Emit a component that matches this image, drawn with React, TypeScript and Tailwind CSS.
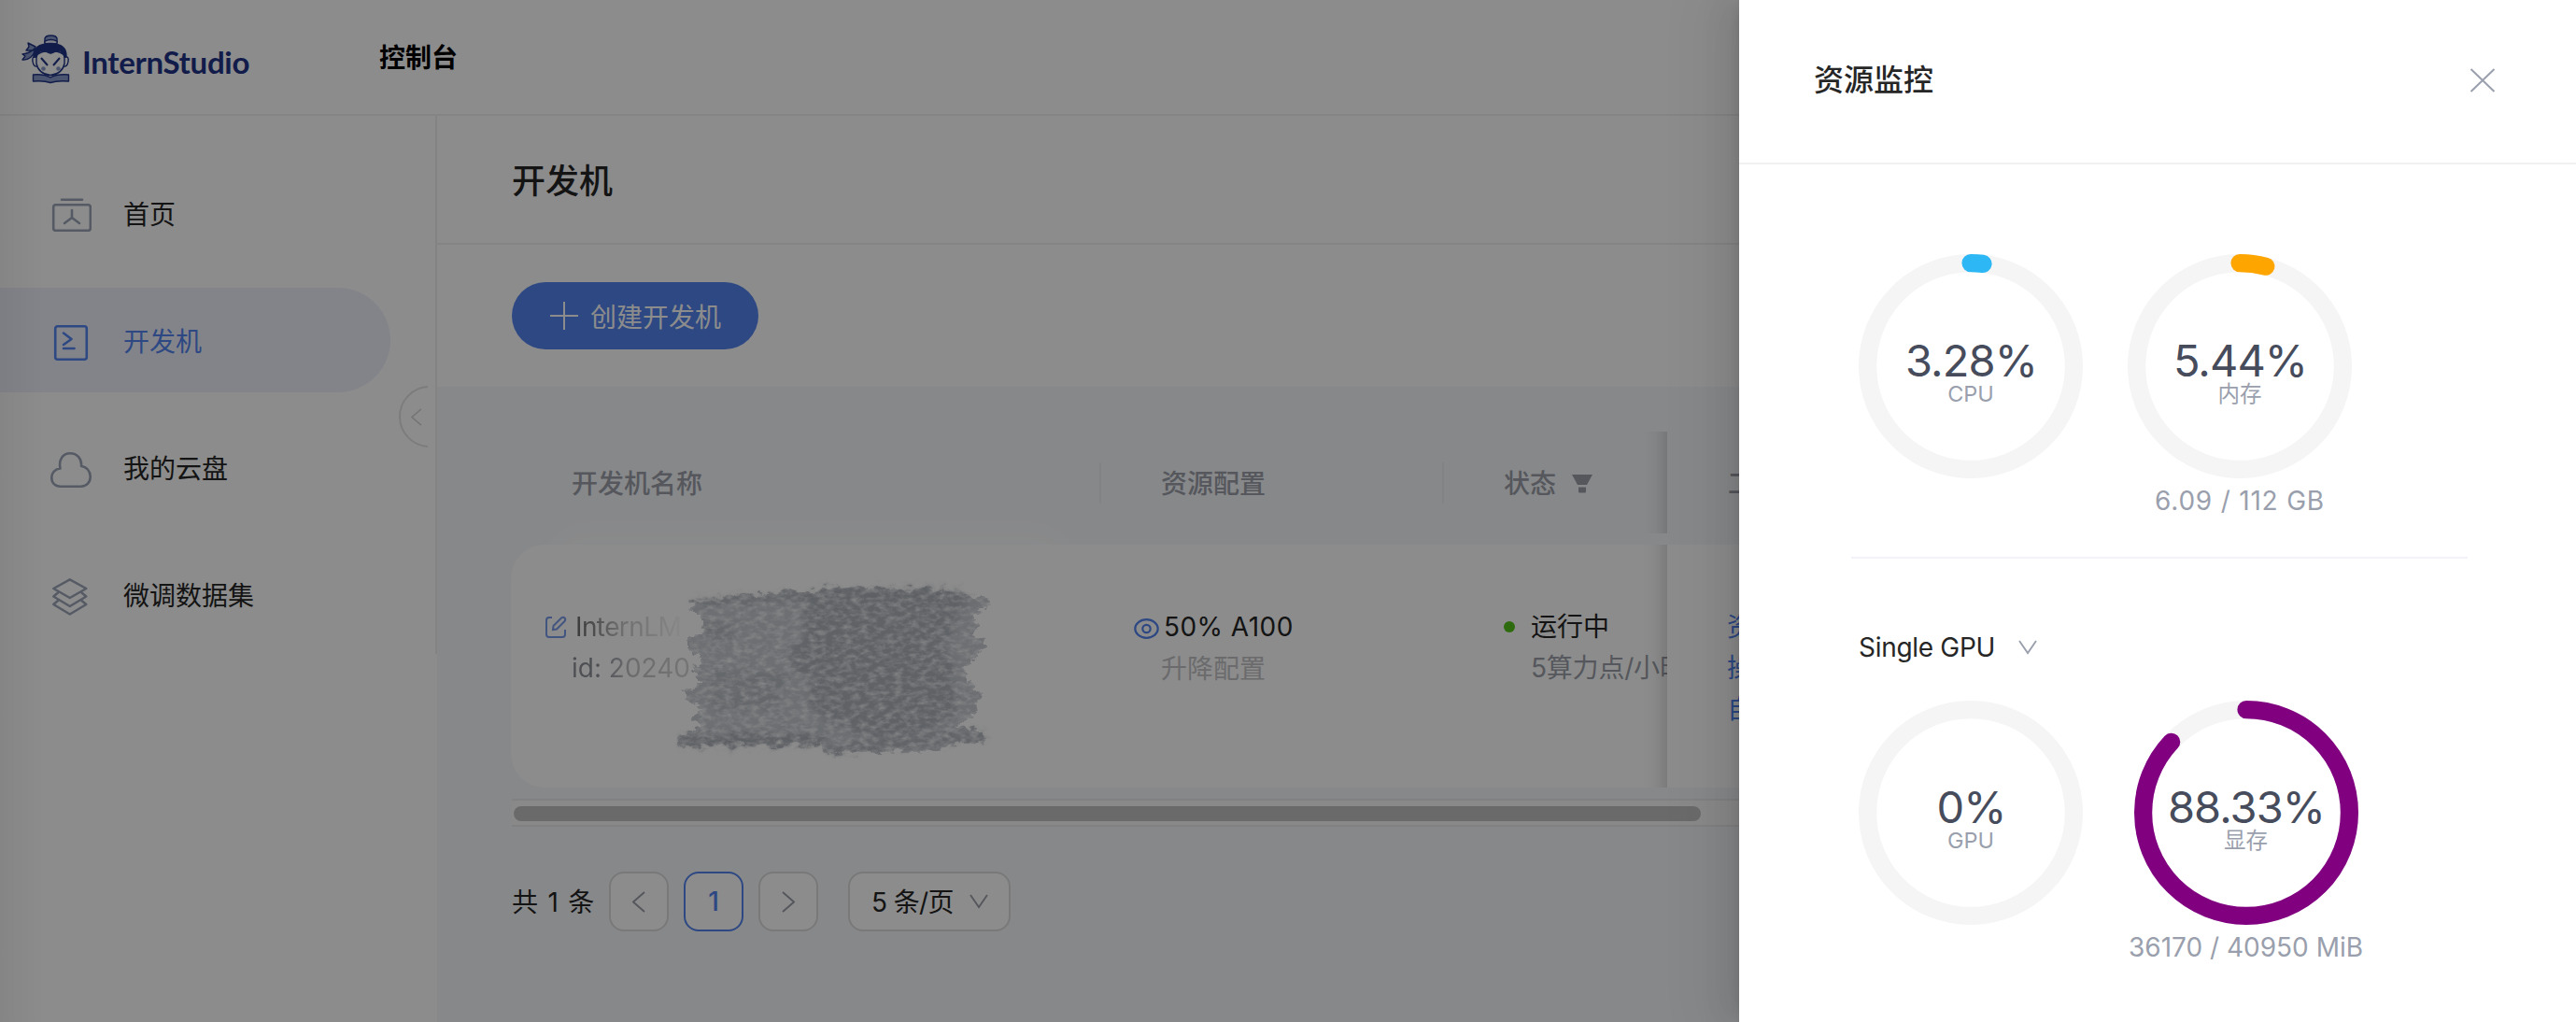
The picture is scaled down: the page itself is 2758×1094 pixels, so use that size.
import type { ReactNode } from "react";

const FONT = "font-['Inter','Noto_Sans_CJK_SC',sans-serif]";

function Logo() {
  return (
    <svg width="52" height="53" viewBox="0 0 52 53" fill="none" stroke="#1f3487" strokeWidth="1.400" strokeLinejoin="round">
      <path d="M25 9 V4 Q26 1 31.500 1 Q37 1 38 4 V9" fill="#8b9ccb" />
      <path d="M25 7 Q31.500 4 38 7 V10 H25 Z" fill="#e8ecf8" />
      <path d="M15 13 L7 9 L8 13 L5 17 L13 17 Z M14 15 Q9 20 1 21 L4 23 L1 27 Q10 28 15 17 Z" fill="#8b9ccb" />
      <path d="M15 24 Q11 23 12 29 Q13 35 17 34 M47 24 Q51 23 50 29 Q49 35 45 34" fill="#fff" />
      <path d="M16 22 V31 Q18 42 31 43.500 Q44 42 46 31 V22 Q38 16 31 19 Q24 16 16 22 Z" fill="#fff" />
      <path d="M13 24 Q12 10 31 9.500 Q49 10 48 24 L46 24 Q43 15 36 18 Q32 20 31 20 Q29 20 26 18 Q19 15 16 24 Z" fill="#1f3487" />
      <path d="M21 25 L28 33 M41 25 L34 33" strokeWidth="2" />
      <g fill="#8b9ccb" stroke="none">
        <circle cx="23.500" cy="36.500" r="2.300" />
        <circle cx="39.500" cy="36.500" r="2.300" />
      </g>
      <path d="M12.500 43 Q24 42 31 46 Q38 42 50.500 43 V50 Q38 49 31 51.500 Q24 49 12.500 50 Z" fill="#8b9ccb" />
    </svg>
  );
}

function NavItem({ label, active, icon }: { label: string; active?: boolean; icon: ReactNode }) {
  return (
    <div
      className={
        active
          ? "flex h-28 w-[418px] items-center rounded-r-full bg-[#eff1fc] pt-1.5 pl-[54px] text-[#5283ee]"
          : "flex h-28 w-[418px] items-center pt-1.5 pl-[54px] text-[#262626]"
      }
    >
      <span className={active ? "w-[78px] text-[#5283ee]" : "w-[78px] text-[#9ba5b7]"}>{icon}</span>
      <span className="-mt-0.5 text-[28px] leading-10">{label}</span>
    </div>
  );
}

function HomeIcon() {
  return (
    <svg className="-mt-0.5" width="44" height="36" viewBox="0 0 44 36" fill="none" stroke="currentColor" strokeWidth="2.600" strokeLinecap="round" strokeLinejoin="round">
      <path d="M12 1.700 H34" />
      <rect x="3.200" y="7.200" width="39.600" height="27.600" rx="2.500" />
      <path d="M23 13 V21 M23 21 L15 27 M23 21 L31 27" />
    </svg>
  );
}
function DevIcon() {
  return (
    <svg width="44" height="38" viewBox="0 0 44 38" fill="none" stroke="currentColor" strokeWidth="2.600" strokeLinecap="round" strokeLinejoin="round">
      <rect x="5.200" y="1.300" width="33.600" height="35.400" rx="2.500" />
      <path d="M14 8.500 L22.500 15 L14 21 M14 25 H25.500" />
    </svg>
  );
}
function CloudIcon() {
  return (
    <svg width="44" height="38" viewBox="0 0 44 38" fill="none" stroke="currentColor" strokeWidth="2.600" strokeLinecap="round" strokeLinejoin="round">
      <path d="M10.500 36.700 H32.500 C39 36.700 42.700 32 42.700 26.500 C42.700 20 38.500 15.500 33 15 C33.800 7 28.500 1.300 21 1.300 C13.500 1.300 8.500 7.500 10.500 17.500 C5 18 1.300 22 1.300 27.500 C1.300 33 5 36.700 10.500 36.700 Z" />
    </svg>
  );
}
function LayersIcon() {
  return (
    <svg width="44" height="40" viewBox="0 0 44 40" fill="none" stroke="currentColor" strokeWidth="2.500" strokeLinecap="round" strokeLinejoin="round">
      <path d="M20.800 1.300 L38.300 11 L20.800 21 L3.300 11 Z" />
      <path d="M8 15.500 L3.300 19.500 L20.800 30 L38.300 19.500 L33.500 15.500" />
      <path d="M8 24 L3.300 28 L20.800 38.500 L38.300 28 L33.500 24" />
    </svg>
  );
}

function Chevron({ dir, w, h }: { dir: "left" | "right" | "down"; w: number; h: number }) {
  const d =
    dir === "down" ? "M1 1 L10 14 L19 1" : dir === "left" ? "M13 1 L1 11.500 L13 22" : "M1 1 L13 11.500 L1 22";
  return (
    <svg width={w} height={h} viewBox={dir === "down" ? "0 0 20 16" : "0 0 14 23"} fill="none" stroke="currentColor" strokeWidth="1.900">
      <path d={d} />
    </svg>
  );
}

function Ring({ percent, color, value, label }: { percent: number; color: string; value: string; label: string }) {
  const r = 110.4;
  const stroke = 19.2;
  const c = 2 * Math.PI * r;
  // Half a stroke is taken off the arc to make up for its round caps.
  const arc = (c * percent) / 100 - stroke / 2;
  return (
    <div className="relative size-60">
      <svg width="240" height="240" viewBox="0 0 240 240" fill="none" strokeWidth={stroke}>
        <circle cx="120" cy="120" r={r} stroke="#f5f5f5" />
        {percent > 0 && (
          <circle
            cx="120"
            cy="120"
            r={r}
            stroke={color}
            strokeLinecap="round"
            strokeDasharray={`${arc} ${c}`}
            transform="rotate(-90 120 120)"
          />
        )}
      </svg>
      <div className="absolute inset-0 flex flex-col items-center pt-[90px]">
        <span className="pl-px text-[47px] leading-[48px] tracking-[-0.900px] text-[#464c5b]">{value}</span>
        <span className="-mt-px text-[23.500px] leading-[26px] text-[#9a9fad]">{label}</span>
      </div>
    </div>
  );
}

function Scribble() {
  return (
    <svg className="absolute top-[37px] left-[165px]" width="364" height="200" viewBox="0 0 364 200">
      <defs>
        <filter id="chalk" x="-5%" y="-5%" width="110%" height="110%" colorInterpolationFilters="sRGB">
          <feTurbulence type="fractalNoise" baseFrequency="0.090 0.130" numOctaves="4" seed="4" result="n" />
          <feDisplacementMap in="SourceGraphic" in2="n" scale="17" xChannelSelector="R" yChannelSelector="G" result="d" />
          <feTurbulence type="fractalNoise" baseFrequency="0.110 0.200" numOctaves="5" seed="9" result="g" />
          <feColorMatrix in="g" type="matrix" values="0 0 0 0 0  0 0 0 0 0  0 0 0 0 0  1.500 0 0 0 0.080" result="a" />
          <feComposite in="d" in2="a" operator="in" result="m" />
          <feGaussianBlur in="m" stdDeviation="0.700" />
        </filter>
        <filter id="soft" x="-10%" y="-10%" width="120%" height="120%">
          <feGaussianBlur stdDeviation="9" />
        </filter>
      </defs>
      <g filter="url(#chalk)">
        <g transform="translate(0 -2) scale(0.357 0.3333) translate(-480 -165)">
          <path
            fill="#c6cad0"
            d="M560 243 L690 222 L900 210 L1030 198 L1350 205 L1360 225 L1450 225 L1448 262 L1400 285 L1418 330 L1400 360 L1440 362 L1435 400 L1385 450 L1385 500 L1420 525 L1420 590 L1350 640 L1440 660 L1440 690 L1340 700 L1330 720 L970 730 L950 700 L530 708 L520 680 L560 655 L600 650 L555 615 L600 585 L540 560 L545 535 L590 510 L560 450 L600 430 L550 400 L550 355 L585 345 L590 290 L560 265 Z"
          />
          <path
            fill="#afb3bb"
            filter="url(#soft)"
            d="M890 218 L1030 205 L1350 205 L1400 235 L1370 260 L1340 330 L1310 380 L1345 440 L1340 500 L1370 570 L1320 620 L1200 680 L1100 680 L950 610 L900 560 L930 490 L850 455 L860 400 L900 350 Z"
          />
          <g filter="url(#soft)" stroke="#a9adb5" fill="none">
            <path d="M565 246 L700 236 L1000 222 L1360 216" strokeWidth="16" />
            <path d="M530 688 L700 688 L960 682" strokeWidth="32" />
            <path d="M970 718 L1150 700 L1440 672" strokeWidth="20" />
            <path d="M620 560 L820 555 M600 330 L690 340 M620 490 L850 500" strokeWidth="50" opacity="0.500" />
          </g>
        </g>
      </g>
    </svg>
  );
}

function TopBar() {
  return (
    <header className="flex h-[124px] shrink-0 border-b-2 border-[#f0f0f0] bg-white">
      <div className="flex w-[406px] pt-[37px] pl-[23px]">
        <Logo />
        <span className="mt-[6px] ml-[13px] font-['Lato'] text-[33px] leading-[46px] font-bold tracking-[-0.300px] text-[#1f3487]">
          InternStudio
        </span>
      </div>
      <span className="mt-[42px] text-[28px] leading-10 font-semibold text-black">控制台</span>
    </header>
  );
}

function Sidebar() {
  return (
    <aside className="relative h-[576px] w-[468px] shrink-0 border-r-2 border-[#eeeeee] bg-white">
      <nav className="flex flex-col gap-6 pt-12">
        <NavItem label="首页" icon={<HomeIcon />} />
        <NavItem label="开发机" active icon={<DevIcon />} />
        <NavItem label="我的云盘" icon={<CloudIcon />} />
        <NavItem label="微调数据集" icon={<LayersIcon />} />
      </nav>
      <div className="absolute top-[289px] left-[427px] h-[66px] w-[31px] overflow-hidden text-[#d6d6d6]">
        <div className="flex size-[66px] items-center rounded-full border-2 border-[#e2e2e2] pl-[11px]">
          <Chevron dir="left" w={12} h={19} />
        </div>
      </div>
    </aside>
  );
}

function TableHeader() {
  return (
    <div className="flex h-[109px] text-[28px] leading-10 font-medium text-[#9b9fa9]">
      <div className="flex w-[632px] items-center justify-between">
        <span className="pt-[3px] pl-[65px]">开发机名称</span>
        <i className="h-11 w-0.5 bg-[#eceef1]" />
      </div>
      <div className="flex w-[367px] items-center justify-between">
        <span className="pt-[3px] pl-16">资源配置</span>
        <i className="h-11 w-0.5 bg-[#eceef1]" />
      </div>
      <div className="flex w-[239px] items-center pl-16">
        <span className="w-[73px] pt-[3px]">状态</span>
        <svg className="mt-0.5" width="22" height="20" viewBox="0 0 22 20" fill="#9b9fa9">
          <path d="M0 0 H22 L16 11 H6 Z M7 13.500 H15 V18.500 Q15 19.500 14 19.500 H8 Q7 19.500 7 18.500 Z" />
        </svg>
        <i className="ml-auto h-full w-[26px] bg-gradient-to-r from-transparent via-black/[0.03] to-black/[0.12]" />
      </div>
      <span className="self-center pt-[3px] pl-[65px] whitespace-nowrap">工具</span>
    </div>
  );
}

function TableRow() {
  return (
    <div className="relative mt-3 flex h-[260px] rounded-[36px] bg-white text-[28px] leading-[44px] text-[#262626]">
      <div className="absolute -top-4 left-10 h-20 w-[560px] rounded-full bg-white/50 blur-md" />
      <div className="w-[632px] pt-[66px]">
        <div className="flex items-center pl-[37px]">
          <svg width="23" height="24" viewBox="0 0 23 24" fill="none" stroke="#7899ea" strokeWidth="2">
            <path d="M7 2 H4 Q1 2 1 5 V20 Q1 23 4 23 H18 Q21 23 21 20 V15" />
            <path d="M8 15 L8.500 11 L17 2.500 Q19 1 20.500 2.500 Q22 4 20.500 6 L12 14.500 Z" />
          </svg>
          <span className="ml-[9px] bg-gradient-to-r from-[#707070] from-5% via-[#c4c4c4] via-40% to-[#f8f8f8] bg-clip-text tracking-[-0.600px] text-transparent">
            InternLM
          </span>
        </div>
        <div className="pl-[65px]">
          <span className="bg-gradient-to-r from-[#8d9098] from-20% via-[#c4c4c8] via-50% to-[#d6d6d8] bg-clip-text text-transparent">
            id: 20240
          </span>
        </div>
      </div>
      <div className="w-[367px] pt-[66px] pl-[35px]">
        <div className="flex items-center text-[#5283ee]">
          <svg className="mt-1" width="27" height="22" viewBox="0 0 27 22" fill="none" stroke="currentColor" strokeWidth="2.200">
            <ellipse cx="13.500" cy="11" rx="12.200" ry="9.800" />
            <circle cx="13.500" cy="11" r="4.200" />
          </svg>
          <span className="ml-[5px] tracking-[0.450px] text-[#262626]">50% A100</span>
        </div>
        <div className="pt-px pl-[29px] text-[#c4c4c6]">升降配置</div>
      </div>
      <div className="relative w-[239px] overflow-hidden pt-[66px] pl-[64px]">
        <div className="flex items-center">
          <i className="size-3 rounded-full bg-[#52c41a]" />
          <span className="ml-[17px]">运行中</span>
        </div>
        <div className="pl-[29px] tracking-[-0.200px] whitespace-nowrap text-[#9b9fa9]">5算力点/小时</div>
        <i className="absolute inset-y-0 right-0 w-[26px] bg-gradient-to-r from-transparent via-black/[0.03] to-black/[0.12]" />
      </div>
      <div className="pt-[66px] pl-16 whitespace-nowrap text-[#5283ee]">
        <div>资源监控</div>
        <div>操作记录</div>
        <div>自定义</div>
      </div>
      <Scribble />
    </div>
  );
}

function Pagination() {
  const box = "flex size-16 items-center justify-center rounded-2xl border-2 bg-white";
  return (
    <div className="mt-12 flex items-center text-[28px] text-[#262626]">
      <span className="w-[104px] pt-px whitespace-nowrap [word-spacing:2.500px]">共 1 条</span>
      <div className="flex gap-4">
        <span className={`${box} border-[#dcdcdc] text-[#9b9fa9]`}>
          <Chevron dir="left" w={14} h={23} />
        </span>
        <span className={`${box} border-[#5283ee] font-medium text-[#5283ee]`}>1</span>
        <span className={`${box} border-[#dcdcdc] text-[#9b9fa9]`}>
          <Chevron dir="right" w={14} h={23} />
        </span>
      </div>
      <div className="ml-8 flex h-16 w-[174px] items-center justify-between rounded-2xl border-2 border-[#dcdcdc] bg-white pr-[22px] pl-[23px]">
        <span className="pt-0.5 tracking-[-0.600px] whitespace-nowrap">5 条/页</span>
        <span className="text-[#9b9fa9]">
          <Chevron dir="down" w={20} h={16} />
        </span>
      </div>
    </div>
  );
}

function Drawer() {
  return (
    <section className="absolute inset-y-0 right-0 w-[896px] bg-white shadow-[-12px_0_32px_0_rgba(0,0,0,0.08),-6px_0_12px_-8px_rgba(0,0,0,0.12),-18px_0_56px_16px_rgba(0,0,0,0.05)]">
      <div className="flex h-[176px] items-center justify-between border-b-2 border-[#f0f0f0] pr-[86px] pb-0.5 pl-[80px]">
        <h2 className="text-[32px] leading-[48px] font-medium text-[#262626]">资源监控</h2>
        <svg width="28" height="26" viewBox="0 0 28 26" fill="none" stroke="#9a9fad" strokeWidth="2">
          <path d="M1.500 1 L26.500 25 M26.500 1 L1.500 25" />
        </svg>
      </div>
      <div className="ml-[120px] flex h-[422px] w-[660px] border-b-2 border-[#f2f2fa] pt-24 pl-2">
        <Ring percent={3.28} color="#2db7f5" value="3.28%" label="CPU" />
        <div className="ml-12 flex flex-col items-center">
          <Ring percent={5.44} color="#ffa500" value="5.44%" label="内存" />
          <span className="mt-0.5 text-[28px] leading-[44px] tracking-[0.800px] text-[#9a9fad]">6.09 / 112 GB</span>
        </div>
      </div>
      <div className="ml-32 flex items-center pt-[73px] text-[28px] leading-[44px] text-[#262626]">
        <span className="w-[171px] tracking-[-0.300px]">Single GPU</span>
        <span className="text-[#9a9fad]">
          <Chevron dir="down" w={20} h={16} />
        </span>
      </div>
      <div className="ml-32 flex pt-[35px]">
        <Ring percent={0} color="#2db7f5" value="0%" label="GPU" />
        <div className="ml-[49px] flex flex-col items-center">
          <Ring percent={88.33} color="#800080" value="88.33%" label="显存" />
          <span className="mt-0.5 text-[28px] leading-[44px] text-[#9a9fad]">36170 / 40950 MiB</span>
        </div>
      </div>
    </section>
  );
}

export default function App() {
  return (
    <div className={`relative flex h-[1094px] w-[2758px] flex-col overflow-hidden bg-white ${FONT}`}>
      <TopBar />
      <div className="flex grow">
        <Sidebar />
        <main className="flex grow flex-col overflow-hidden bg-[#f6f8fb]">
          <div className="flex h-[138px] items-center border-b-2 border-[#f0f0f0] bg-white pt-[3px] pl-20">
            <h1 className="text-[36px] leading-[54px] font-medium text-[#262626]">开发机</h1>
          </div>
          <div className="h-[152px] bg-white pt-10 pl-20">
            <button className="flex h-[72px] w-[264px] items-center rounded-full bg-[#5283ee] pl-[41px] text-[28px] text-white">
              <svg width="30" height="30" viewBox="0 0 30 30" stroke="currentColor" strokeWidth="2">
                <path d="M15 0 V30 M0 15 H30" />
              </svg>
              <span className="ml-[13px] pt-[3px]">创建开发机</span>
            </button>
          </div>
          <div className="pt-12 pl-[79px]">
            <TableHeader />
            <TableRow />
            <div className="mt-3 ml-px h-[30px] border-y-2 border-[#ebebeb] bg-[#fafafa] pt-1.5 pl-0.5">
              <div className="h-4 w-[1271px] rounded-full bg-[#c1c1c1]" />
            </div>
            <div className="pl-px">
              <Pagination />
            </div>
          </div>
        </main>
      </div>
      <div className="absolute inset-0 bg-black/45" />
      <div className="absolute inset-y-0 left-0 w-12 bg-gradient-to-r from-black/5 to-transparent" />
      <Drawer />
    </div>
  );
}
